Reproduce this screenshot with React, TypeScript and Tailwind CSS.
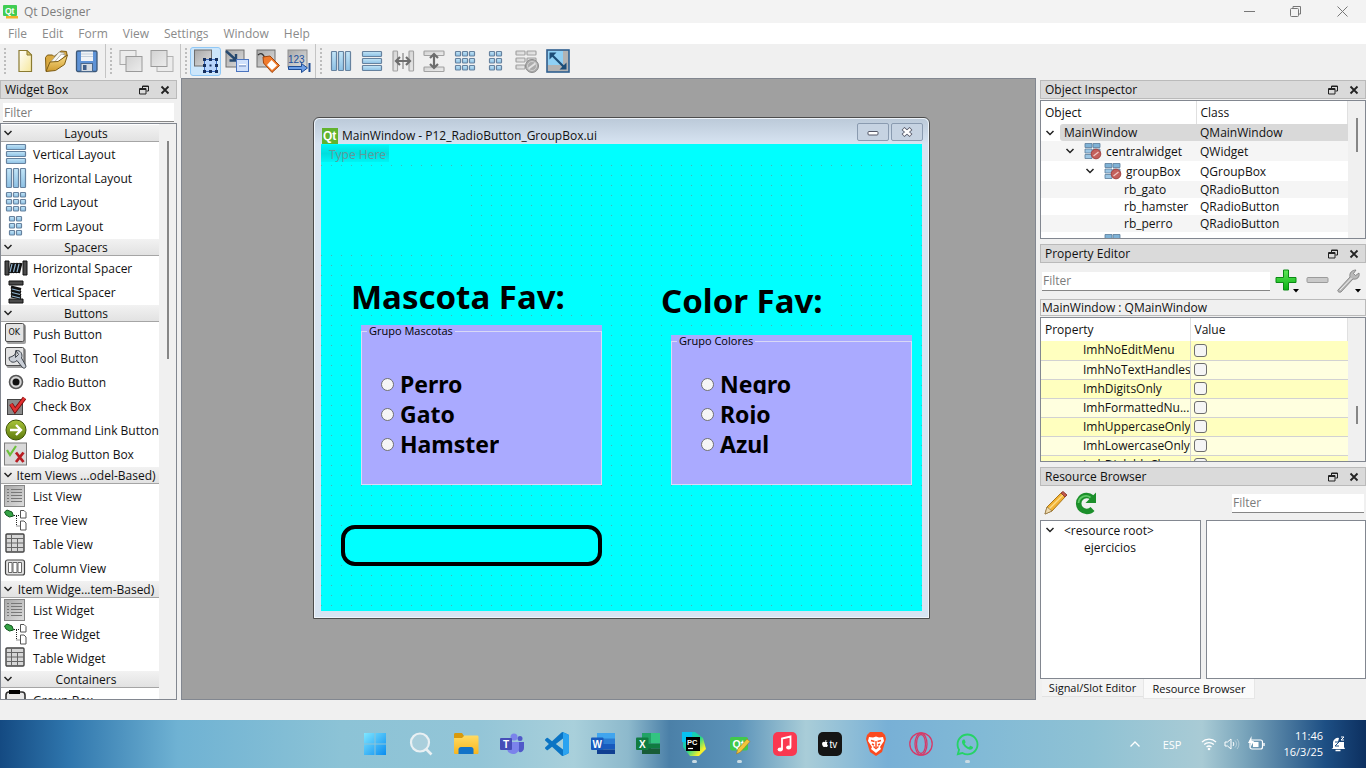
import React from "react";
import { FaApple, FaWhatsapp } from "react-icons/fa";

type P = { children?: React.ReactNode };

/* ---------- shared drawing helpers ---------- */

function Defs() {
  return (
    <svg width="0" height="0" className="absolute" aria-hidden="true">
      <defs>
        <linearGradient id="blueBar" x1="0" y1="0" x2="0" y2="1">
          <stop offset="0" stopColor="#c4e6f8" />
          <stop offset="1" stopColor="#8cc0e4" />
        </linearGradient>
        <linearGradient id="grey" x1="0" y1="0" x2="1" y2="1">
          <stop offset="0" stopColor="#a8a8a8" />
          <stop offset="1" stopColor="#dedede" />
        </linearGradient>
        <linearGradient id="greyLight" x1="0" y1="0" x2="1" y2="1">
          <stop offset="0" stopColor="#d2d2d2" />
          <stop offset="1" stopColor="#ececec" />
        </linearGradient>
        <linearGradient id="gold" x1="0" y1="0" x2="0" y2="1">
          <stop offset="0" stopColor="#fbe08a" />
          <stop offset="1" stopColor="#cf9a2e" />
        </linearGradient>
        <linearGradient id="page" x1="0" y1="0" x2="1" y2="1">
          <stop offset="0" stopColor="#ffffff" />
          <stop offset="1" stopColor="#f6e79a" />
        </linearGradient>
        <linearGradient id="green" x1="0" y1="0" x2="0" y2="1">
          <stop offset="0" stopColor="#5fe85a" />
          <stop offset="1" stopColor="#08b010" />
        </linearGradient>
        <linearGradient id="win" x1="0" y1="0" x2="1" y2="1">
          <stop offset="0" stopColor="#7fe6ff" />
          <stop offset="1" stopColor="#0a8df0" />
        </linearGradient>
        <linearGradient id="folder" x1="0" y1="0" x2="0" y2="1">
          <stop offset="0" stopColor="#ffdb63" />
          <stop offset="1" stopColor="#f8b61e" />
        </linearGradient>
        <linearGradient id="pc" x1="0" y1="0" x2="1" y2="1">
          <stop offset="0" stopColor="#07c3f2" />
          <stop offset="0.5" stopColor="#21d789" />
          <stop offset="0.8" stopColor="#f8f02c" />
        </linearGradient>
        <linearGradient id="olive" x1="0" y1="0" x2="0" y2="1">
          <stop offset="0" stopColor="#a8c43a" />
          <stop offset="1" stopColor="#5d7a0c" />
        </linearGradient>
      </defs>
    </svg>
  );
}

function Svg({ size = 24, box = 24, children }: P & { size?: number; box?: number }) {
  return (
    <svg width={size} height={size} viewBox={`0 0 ${box} ${box}`} fill="none" className="shrink-0" aria-hidden="true">
      {children}
    </svg>
  );
}

type Bar = [number, number, number, number];
function Bars({ list, off }: { list: Bar[]; off?: boolean }) {
  return (
    <>
      {list.map(([x, y, w, h]) => (
        <rect key={`${x}-${y}`} x={x} y={y} width={w} height={h} rx=".8" fill={off ? "url(#greyLight)" : "url(#blueBar)"} stroke={off ? "#a2a2a2" : "#66829f"} strokeWidth="1.2" />
      ))}
    </>
  );
}

const rowsBars: Bar[] = [[2.5, 2.5, 19, 5], [2.5, 9.5, 19, 5], [2.5, 16.5, 19, 5]];
const colsBars: Bar[] = [[2.5, 2.5, 5, 19], [9.5, 2.5, 5, 19], [16.5, 2.5, 5, 19]];
const gridBars: Bar[] = [2.5, 9.5, 16.5].flatMap((y) => [2.5, 9.5, 16.5].map((x) => [x, y, 5, 4.5] as Bar));
const formBars: Bar[] = [2.5, 9.5, 16.5].flatMap((y) => [5.5, 12.5].map((x) => [x, y, 5, 4.5] as Bar));

/* ---------- toolbar icons ---------- */

const NewIcon = () => (
  <Svg><path d="M6 1.5h8l4.5 4.5v16.5H6z" fill="url(#page)" stroke="#8a7a30" strokeWidth="1.2" /><path d="M14 1.5V6h4.5z" fill="#e0c76a" stroke="#8a7a30" /></Svg>
);
const OpenIcon = () => (
  <Svg>
    <path d="M2 22l-.5-13.500 2-2.500h5l1.500 1.500L17 2l5.500.5L23 6z" fill="#d9a940" stroke="#7d5c14" />
    <path d="M5 15L15 3l5.500 1L10 17z" fill="#f7f7f2" stroke="#9a9a90" strokeWidth=".7" />
    <path d="M7 17L17.500 5l4 1L11 18z" fill="#fff" stroke="#9a9a90" strokeWidth=".7" />
    <path d="M2 22.500l4-9.500 8-.5L23.500 6l-3 9.500-9 6z" fill="url(#gold)" stroke="#7d5c14" />
  </Svg>
);
const SaveIcon = () => (
  <Svg>
    <rect x="1.500" y="2" width="20.500" height="20.500" rx="1.500" fill="#5d92d6" stroke="#3c5878" strokeWidth="1.300" />
    <rect x="6" y="2.500" width="12" height="9.500" fill="#f0f3f7" /><path d="M6 5h12M6 7.500h12" stroke="#c3cfdc" />
    <rect x="6" y="14.500" width="11.500" height="8" fill="#d5dbe2" stroke="#4a688c" /><rect x="8" y="16" width="3.500" height="5" fill="#3f5f8a" />
  </Svg>
);
const FrontIcon = () => (
  <Svg>
    <rect x="1" y="1.500" width="16" height="14" fill="#ececec" stroke="#a9a9a9" />
    <rect x="7" y="7.500" width="16" height="15" fill="url(#greyLight)" stroke="#9a9a9a" />
  </Svg>
);
const BackIcon = () => (
  <Svg>
    <rect x="7" y="7.500" width="16" height="15" fill="#ececec" stroke="#b2b2b2" />
    <rect x="1" y="1.500" width="16" height="16" fill="url(#greyLight)" stroke="#9a9a9a" />
  </Svg>
);
const GreySquare = () => <rect x="1" y="1" width="18" height="17" fill="url(#grey)" stroke="#6e6e6e" />;
const EditWidgetsIcon = () => (
  <Svg>
    <rect x="0.500" y="1" width="17" height="16" fill="url(#grey)" stroke="#6e6e6e" />
    <rect x="10.500" y="10.500" width="12" height="12" fill="#b7d4fb" stroke="#3a6bc0" />
    {[9, 15, 21].flatMap((x) => [9, 15, 21].map((y) => (x === 15 && y === 15 ? null : <rect key={`${x}${y}`} x={x} y={y} width="3" height="3" fill="#16305e" />)))}
    <rect x="15.500" y="15.500" width="2" height="2" fill="#16305e" />
  </Svg>
);
const SignalsIcon = () => (
  <Svg>
    <GreySquare />
    <path d="M1 2l10 9M11 5v6.500H4.500" stroke="#26496f" strokeWidth="2.400" />
    <rect x="11.500" y="10.500" width="12" height="12" fill="#cfe0fb" stroke="#4b74bf" /><path d="M14 16.500h7" stroke="#fff" strokeWidth="3" /><path d="M14 17h7" stroke="#3e68b5" />
  </Svg>
);
const BuddiesIcon = () => (
  <Svg>
    <GreySquare />
    <path d="M2 6c3-3 5-1 7 3" stroke="#333" strokeWidth="1.300" />
    <path d="M7 8l7-1 9.500 9.500-7.500 7L7.500 14z" fill="#f07a2c" stroke="#a0440c" />
    <path d="M15.500 11l5.500 5.500-5 4.500-5-5z" fill="#fff" />
  </Svg>
);
const TabOrderIcon = () => (
  <Svg>
    <rect x="1" y="1" width="19" height="17" fill="url(#grey)" stroke="#8e8e8e" />
    <text x="1" y="14" fontSize="10" fill="#1c4f9c" fontFamily="Liberation Sans, sans-serif">123</text>
    <path d="M1.500 17.500h13v-3l6 4.500-6 4.500v-3h-13z" fill="#6d9fe6" stroke="#1f4c94" /><path d="M22.500 14v9" stroke="#1f4c94" strokeWidth="2" />
  </Svg>
);
const SplitHIcon = () => (
  <Svg>
    <Bars off list={[[2, 2, 4.500, 20], [18, 2, 4.500, 20]]} />
    <path d="M12 4v16" stroke="#b0b0b0" strokeWidth="2" /><path d="M5 12h14M9 8l-4 4 4 4M15 8l4 4-4 4" stroke="#6d6d6d" strokeWidth="2.200" />
  </Svg>
);
const SplitVIcon = () => (
  <Svg>
    <Bars off list={[[2, 2, 20, 4.500], [2, 18, 20, 4.500]]} />
    <path d="M12 5v14M8 9l4-4 4 4M8 15l4 4 4-4" stroke="#6d6d6d" strokeWidth="2.200" />
  </Svg>
);
const BreakIcon = () => (
  <Svg>
    <Bars off list={[[1, 2, 9, 4], [12, 2, 9, 4], [1, 9, 9, 4], [12, 9, 9, 4], [1, 16, 9, 4]]} />
    <circle cx="17" cy="17" r="6.500" fill="#ababab" stroke="#8c8c8c" /><path d="M13 20l8-6" stroke="#e2e2e2" strokeWidth="2" /><circle cx="17" cy="17" r="4.500" stroke="#d0d0d0" strokeWidth="1" />
  </Svg>
);
const AdjustIcon = () => (
  <Svg>
    <rect x="1" y="1" width="22" height="22" fill="#b3b3b3" stroke="#2f5f90" strokeWidth="1.600" /><rect x="2" y="2" width="15" height="14" fill="#8fd0f5" />
    <path d="M5 5l14 14" stroke="#1c4d78" strokeWidth="2.200" /><path d="M3.500 3.500h7l-7 7zM20.500 20.500h-7l7-7z" fill="#1c4d78" />
  </Svg>
);

/* ---------- widget box icons ---------- */

const VSpring = () => (
  <>
    <path d="M5 1h14v4H5zM5 19h14v4H5z" fill="#4a4a4a" stroke="#111" />
    <path d="M7 7l10 2.500M7 10l10 2.500M7 13l10 2.500M7 16l10 2" stroke="#111" strokeWidth="3" /><path d="M8 9l8 2M8 12.500l8 2M8 16l8 2" stroke="#8fb3cf" strokeWidth="1.200" />
  </>
);
const VSpacer = () => <Svg><VSpring /></Svg>;
const HSpacer = () => <Svg><g transform="rotate(90 12 12)"><VSpring /></g></Svg>;
const Btn = ({ children }: P) => (
  <>
    <rect x="2.500" y="2.500" width="19.500" height="19.500" rx="2" fill="#a0a0a0" /><rect x="1.500" y="1.500" width="18.500" height="18" rx="1.500" fill="#e3e3e3" stroke="#4b4b4b" />
    {children}
  </>
);
const PushIcon = () => <Svg><Btn><text x="4.500" y="13" fontSize="8" fill="#111" fontFamily="DejaVu Sans, sans-serif">OK</text></Btn></Svg>;
const ToolIcon = () => (
  <Svg><Btn><path d="M12 4.500l-1 4-3 2 -3 1c0 5 5 6 8 3l5 6.500c2 2.500 5 .5 3.500-2L17.500 12c1.500-4-1-8-5.500-7.500l2.500 4-3 3z" fill="#c9ced6" stroke="#3d434b" /></Btn></Svg>
);
const RadioIcon = () => <Svg><circle cx="12" cy="12" r="6.500" fill="#d5d5d5" stroke="#555" strokeWidth="1.600" /><circle cx="12" cy="12" r="3.500" fill="#111" /></Svg>;
const CheckIcon = () => <Svg><rect x="3.500" y="5.500" width="15" height="15" fill="#8b8b8b" stroke="#444" /><path d="M7 10l4 6.500L20.500 4" stroke="#7a0909" strokeWidth="4.200" /><path d="M7 10l4 6.500L20.500 4" stroke="#e03030" strokeWidth="2.600" /></Svg>;
const CommandIcon = () => <Svg><circle cx="12" cy="12" r="10" fill="url(#olive)" stroke="#3e5406" /><path d="M6 12h11M12 7l5 5-5 5" stroke="#fff" strokeWidth="2.400" /></Svg>;
const DialogIcon = () => <Svg><rect x=".5" y="1" width="22" height="22" fill="#d9d9d9" stroke="#7c7c7c" /><path d="M3 8l3 5 6-9" stroke="#6cc03c" strokeWidth="2.200" /><path d="M12 10.500l7.500 9.500M19.500 10.500L12 20" stroke="#b81c22" strokeWidth="2.800" /></Svg>;
const ListIcon = () => <Svg><rect x=".5" y="1.500" width="20" height="21" fill="url(#grey)" stroke="#858585" /><path d="M7 5.500h11M7 8.500h11M7 11.500h11M7 14.500h11M7 17.500h11M3 5.500h2M3 8.500h2M3 11.500h2M3 14.500h2M3 17.500h2" stroke="#777" /></Svg>;
const TreeIcon = () => (
  <Svg>
    <path d="M.5 4L3 2l5 2 1.500 4-4 1L2 7z" fill="#35a345" stroke="#11551d" /><path d="M10 7.500h6M12.500 8v10H16" stroke="#222" strokeDasharray="1 1" />
    <path d="M16.500 2.500h3.500l2 2V10h-5.500zM16.500 13h3.500l2 2v7h-5.500z" fill="#fff" stroke="#555" />
  </Svg>
);
const TableIcon = () => <Svg><rect x="2" y="2" width="18" height="18" rx="1" fill="#d7d7d7" stroke="#444" strokeWidth="1.400" /><path d="M2 6.500h18M2 11h18M2 15.500h18M7.500 2v18M13.500 7v13" stroke="#666" /></Svg>;
const ColumnIcon = () => <Svg><rect x="1.500" y="4" width="19" height="15" rx="2" fill="#e2e2e2" stroke="#444" strokeWidth="1.200" /><path d="M4.500 6.500h3.500v10H4.500zM9 6.500h4v10H9zM14 6.500h3.500v10H14z" fill="#fff" stroke="#666" /></Svg>;
const GroupIcon = () => <Svg><rect x="2" y="4" width="19" height="18" rx="3" fill="#e8e8e8" stroke="#333" strokeWidth="1.600" /><rect x="5" y="2" width="11" height="4" fill="#000" /></Svg>;

/* ---------- dock chrome ---------- */

const Chevron = () => <Svg size={10} box={10}><path d="M1.500 3L5 6.500 8.500 3" stroke="#222" strokeWidth="1.500" /></Svg>;

function DockTitle({ children }: P) {
  return (
    <header className="flex h-[19px] shrink-0 items-center border border-[#bababa] bg-[#dadada] pl-1 pr-[6px]">
      <h2 className="flex-1">{children}</h2>
      <button aria-label={`Float ${children}`} className="mr-[11px]">
        <Svg size={10} box={10}><path d="M3.500 3V1h6v5H7.500M3 1.500h7M.5 3.500h6.500v5.500H.5zM0 4.500h7" stroke="#222" /></Svg>
      </button>
      <button aria-label={`Close ${children}`}>
        <Svg size={10} box={10}><path d="M1.500 1.500l7 7M8.500 1.500l-7 7" stroke="#222" strokeWidth="1.800" /></Svg>
      </button>
    </header>
  );
}

function Filter({ label, className }: { label: string; className: string }) {
  return <input type="text" aria-label={label} placeholder="Filter" className={`h-[19px] min-w-0 border-b border-[#868686] bg-white px-px text-[#222] outline-none placeholder:text-[#7b7b7b] ${className}`} />;
}

/* ---------- data ---------- */

const categories: { name: string; items: [string, React.ReactNode][] }[] = [
  { name: "Layouts", items: [["Vertical Layout", <Svg key="a"><Bars list={rowsBars} /></Svg>], ["Horizontal Layout", <Svg key="b"><Bars list={colsBars} /></Svg>], ["Grid Layout", <Svg key="c"><Bars list={gridBars} /></Svg>], ["Form Layout", <Svg key="d"><Bars list={formBars} /></Svg>]] },
  { name: "Spacers", items: [["Horizontal Spacer", <HSpacer key="a" />], ["Vertical Spacer", <VSpacer key="b" />]] },
  { name: "Buttons", items: [["Push Button", <PushIcon key="a" />], ["Tool Button", <ToolIcon key="b" />], ["Radio Button", <RadioIcon key="c" />], ["Check Box", <CheckIcon key="d" />], ["Command Link Button", <CommandIcon key="e" />], ["Dialog Button Box", <DialogIcon key="f" />]] },
  { name: "Item Views ...odel-Based)", items: [["List View", <ListIcon key="a" />], ["Tree View", <TreeIcon key="b" />], ["Table View", <TableIcon key="c" />], ["Column View", <ColumnIcon key="d" />]] },
  { name: "Item Widge...tem-Based)", items: [["List Widget", <ListIcon key="a" />], ["Tree Widget", <TreeIcon key="b" />], ["Table Widget", <TableIcon key="c" />]] },
  { name: "Containers", items: [["Group Box", <GroupIcon key="a" />]] },
];

const toolbars: { name: string; edge: string; checked?: number; tools: [string, React.ReactNode][] }[] = [
  { name: "File", edge: "border-r border-[#c4c4c4] pr-[3px]", tools: [["New", <NewIcon key="a" />], ["Open", <OpenIcon key="b" />], ["Save", <SaveIcon key="c" />]] },
  { name: "Edit", edge: "border-r border-[#c4c4c4] pr-[3px]", tools: [["Bring to Front", <FrontIcon key="a" />], ["Send to Back", <BackIcon key="b" />]] },
  { name: "Tools", edge: "border-r border-[#c4c4c4] pr-px", checked: 0, tools: [["Edit Widgets", <EditWidgetsIcon key="a" />], ["Edit Signals/Slots", <SignalsIcon key="b" />], ["Edit Buddies", <BuddiesIcon key="c" />], ["Edit Tab Order", <TabOrderIcon key="d" />]] },
  {
    name: "Form",
    edge: "",
    tools: [
      ["Lay Out Horizontally", <Svg key="a"><Bars list={colsBars} /></Svg>], ["Lay Out Vertically", <Svg key="b"><Bars list={rowsBars} /></Svg>],
      ["Lay Out Horizontally in Splitter", <SplitHIcon key="c" />], ["Lay Out Vertically in Splitter", <SplitVIcon key="d" />],
      ["Lay Out in a Grid", <Svg key="e"><Bars list={gridBars} /></Svg>], ["Lay Out in a Form Layout", <Svg key="f"><Bars list={formBars} /></Svg>],
      ["Break Layout", <BreakIcon key="g" />], ["Adjust Size", <AdjustIcon key="h" />],
    ],
  },
];

const properties = ["ImhNoEditMenu", "ImhNoTextHandles", "ImhDigitsOnly", "ImhFormattedNu...", "ImhUppercaseOnly", "ImhLowercaseOnly", "ImhDialableChar..."];

/* ---------- sections ---------- */

function TitleBar() {
  return (
    <header className="flex h-[23px] shrink-0 items-center bg-[#f3f3f3] pl-[3px] text-[#7d7d7d]">
      <Svg size={15} box={15}>
        <rect x="0" y="1" width="14" height="11" rx="1" fill="#41cd52" /><rect x="3" y="12" width="12" height="2.500" fill="#f0b429" />
        <text x="2" y="9.500" fontSize="8.500" fill="#fff" fontWeight="700" fontFamily="Liberation Sans, sans-serif">Qt</text>
      </Svg>
      <h1 className="ml-[6px] flex-1">Qt Designer</h1>
      <button aria-label="Minimize" className="flex w-[46px] justify-center"><Svg size={11} box={11}><path d="M0 5.500h11" stroke="#777" /></Svg></button>
      <button aria-label="Restore" className="flex w-[46px] justify-center"><Svg size={11} box={11}><path d="M3 2.500V.5h7.500V8h-2" stroke="#777" /><rect x=".5" y="2.500" width="8" height="8" rx="1" stroke="#777" /></Svg></button>
      <button aria-label="Close" className="flex w-[48px] justify-center"><Svg size={11} box={11}><path d="M.5.5l10 10M10.500.5l-10 10" stroke="#777" /></Svg></button>
    </header>
  );
}

function Toolbars() {
  return (
    <div className="flex h-[34px] shrink-0 bg-[#f0f0f0]">
      {toolbars.map((bar) => (
        <div key={bar.name} role="toolbar" aria-label={bar.name} className={`flex items-center pl-[4px] ${bar.edge}`}>
          <span className="mr-[3px] flex flex-col gap-[2px]">
            {[0, 1, 2, 3, 4, 5, 6].map((n) => <i key={n} className="size-[2px] bg-[#bdbdbd]" />)}
          </span>
          {bar.tools.map(([name, icon], n) => (
            <button key={name} aria-label={name} className={`flex h-[29px] w-[31px] items-center justify-center rounded-[3px] border ${bar.checked === n ? "border-[#90c8f6] bg-[#cce6fb]" : "border-transparent"}`}>
              {icon}
            </button>
          ))}
        </div>
      ))}
    </div>
  );
}

function WidgetBox() {
  return (
    <aside className="flex w-[177px] shrink-0 flex-col pt-[2px]">
      <DockTitle>Widget Box</DockTitle>
      <Filter label="Filter widgets" className="mx-[3px] mt-[4px]" />
      <div className="mt-px flex min-h-0 flex-1 border border-[#828790] bg-white">
        <div className="min-w-0 flex-1 overflow-hidden">
          {categories.map((c) => (
            <section key={c.name}>
              <h3 className="flex h-[18px] items-center whitespace-nowrap border-y border-t-white border-b-[#a5a5a5] bg-linear-to-b from-[#f2f2f2] to-[#e2e2e2] pl-[2px]">
                <Chevron />
                <span className="flex-1 text-center">{c.name}</span>
              </h3>
              <ul>
                {c.items.map(([name, icon]) => (
                  <li key={name} className="flex h-[24px] items-center gap-[5px] whitespace-nowrap pl-[3px]">
                    {icon}
                    {name}
                  </li>
                ))}
              </ul>
            </section>
          ))}
        </div>
        <div className="w-[17px] shrink-0 bg-[#f0f0f0] pl-[8px] pt-[17px]"><div className="h-[218px] w-[2px] bg-[#868686]" /></div>
      </div>
    </aside>
  );
}

function Group({ title, name, options, className, indent }: { title: string; name: string; options: string[]; className: string; indent: string }) {
  return (
    <div className={`absolute w-[241px] bg-[#aaaaff] ${className}`}>
      <fieldset className="h-full border border-[#d9d9f6]">
        <legend className="ml-[5px] h-[12px] px-[2px] text-[11px] leading-[12px]">{title}</legend>
        <div className={`absolute bottom-[31px] flex flex-col gap-[10px] ${indent}`}>
          {options.map((o) => (
            <label key={o} className="flex h-[20px] items-center gap-[6px] overflow-hidden font-['Noto_Sans',sans-serif] text-[23px] leading-[20px] font-bold">
              <input type="radio" name={name} className="size-[13px] appearance-none rounded-full border border-[#707070] bg-[#f6f6f6]" />
              <span className="h-[20px] leading-[20px]">{o}</span>
            </label>
          ))}
        </div>
      </fieldset>
    </div>
  );
}

function FormWindow() {
  return (
    <section className="absolute left-[131px] top-[38px] w-[617px] rounded-t-[6px] border border-[#4c4c4c] bg-[#d7e4f2] px-[7px] pb-[7px] shadow-[inset_0_0_0_1px_#eef4fa]">
      <header className="-mx-[6px] mt-px flex h-[25px] items-center rounded-t-[5px] bg-linear-to-b from-[#bccad9] to-[#d7e4f2] px-[6px]">
        <span className="ml-px mt-[8px]">
          <Svg size={16} box={16}><rect width="16" height="16" fill="#62b32e" /><text x="1" y="12" fontSize="12" fontWeight="700" fill="#fff" fontFamily="Liberation Sans Narrow, Liberation Sans, sans-serif">Qt</text></Svg>
        </span>
        <h2 className="ml-[4px] mt-[8px] flex-1">MainWindow - P12_RadioButton_GroupBox.ui</h2>
        <button aria-label="Minimize form" className="mr-[2px] flex h-[18px] w-[32px] items-center justify-center rounded-[2px] border border-[#8a9bb0] bg-[#c6d3e2]">
          <Svg size={12} box={12}><rect x="1" y="5.500" width="10" height="3.500" rx="1" fill="#fff" stroke="#535666" /></Svg>
        </button>
        <button aria-label="Close form" className="-mr-px flex h-[18px] w-[32px] items-center justify-center rounded-[2px] border border-[#8a9bb0] bg-[#c6d3e2]">
          <Svg size={12} box={12}><path d="M2 2.500l8 7M10 2.500l-8 7" stroke="#535666" strokeWidth="4.200" /><path d="M2.500 3l7 6M9.500 3l-7 6" stroke="#fff" strokeWidth="2.400" /></Svg>
        </button>
      </header>
      <div className="relative h-[467px] bg-[#00ffff] text-black">
        <svg className="absolute inset-0 size-full" aria-hidden="true">
          <defs><pattern id="dots" width="10" height="10" patternUnits="userSpaceOnUse" y="1"><rect width="1" height="1" fill="#4cb4b4" /></pattern></defs>
          <rect y="21" width="601" height="446" fill="url(#dots)" />
          <path d="M0 25h148v80H0zM490 25h92v80h-92zM30 135h249v35H30zM340 138h180v39H340z" fill="#00ffff" />
        </svg>
        <div className="absolute left-0 top-px h-[17px] w-[68px] bg-linear-to-b from-[#00f4f4] via-[#00dede] to-[#00f4f4] pl-[8px] leading-[20px] text-[#5f9a9a]">Type Here</div>
        <h3 className="absolute left-[30px] top-[131px] whitespace-nowrap font-['Noto_Sans',sans-serif] text-[33px] leading-[44px] font-bold">Mascota Fav:</h3>
        <h3 className="absolute left-[340px] top-[135px] whitespace-nowrap font-['Noto_Sans',sans-serif] text-[33px] leading-[44px] font-bold">Color Fav:</h3>
        <Group title="Grupo Mascotas" name="mascota" options={["Perro", "Gato", "Hamster"]} className="left-[40px] top-[181px] h-[160px]" indent="left-[20px]" />
        <Group title="Grupo Colores" name="color" options={["Negro", "Rojo", "Azul"]} className="left-[350px] top-[191px] h-[150px]" indent="left-[30px]" />
        <input type="text" aria-label="Resultado" className="absolute left-[20px] top-[381px] h-[41px] w-[261px] rounded-[14px] border-4 border-black bg-[#00ffff] px-2 outline-none" />
      </div>
    </section>
  );
}

const LayoutBroken = () => (
  <Svg size={18} box={18}>
    <path d="M1 1.500h7v4H1zM9 1.500h7v4H9z" fill="#7fb2d6" stroke="#5b7c9a" strokeWidth=".8" />
    <path d="M1 7h7v4H1zM9 7h7v4H9zM1 12.500h7v4H1z" fill="#9cc6e4" stroke="#5b7c9a" strokeWidth=".8" />
    <circle cx="12" cy="12" r="4.800" fill="#c4605c" stroke="#a34444" /><path d="M9.500 14l5-4" stroke="#efc8c6" strokeWidth="1.300" />
  </Svg>
);

function ObjectInspector() {
  return (
    <section className="flex h-[159px] shrink-0 flex-col">
      <DockTitle>Object Inspector</DockTitle>
      <div className="mt-px flex min-h-0 flex-1 overflow-hidden border border-[#828790] bg-white">
        <table className="w-full table-fixed border-collapse self-start text-left">
          <colgroup><col className="w-[155px]" /><col /></colgroup>
          <thead>
            <tr className="h-[23px]"><th className="border-r border-[#e0e0e0] p-0 pl-1 font-normal">Object</th><th className="border-r border-[#e0e0e0] p-0 pl-[4px] font-normal">Class</th></tr>
          </thead>
          <tbody>
            <tr className="h-[17px]"><td className="p-0"><div className="flex items-center gap-[5px] pl-[4px]"><Chevron /><span className="-my-px h-[17px] flex-1 rounded-l-[3px] bg-[#d9d9d9] pl-[4px] leading-[17px]">MainWindow</span></div></td><td className="bg-[#d9d9d9] p-0 pl-[4px]">QMainWindow</td></tr>
            <tr className="h-[20px] bg-[#f5f5f5]"><td className="p-0"><div className="flex items-center pl-[24px]"><Chevron /><span className="ml-[9px] mr-[4px]"><LayoutBroken /></span>centralwidget</div></td><td className="p-0 pl-[4px]">QWidget</td></tr>
            <tr className="h-[20px]"><td className="p-0"><div className="flex items-center pl-[44px]"><Chevron /><span className="ml-[9px] mr-[4px]"><LayoutBroken /></span>groupBox</div></td><td className="p-0 pl-[4px]">QGroupBox</td></tr>
            {["rb_gato", "rb_hamster", "rb_perro"].map((n) => (
              <tr key={n} className="h-[17px] odd:bg-white even:bg-[#f5f5f5]"><td className="p-0 pl-[83px]">{n}</td><td className="p-0 pl-[4px]">QRadioButton</td></tr>
            ))}
            <tr className="h-[20px]"><td className="p-0"><div className="flex items-center pl-[44px]"><Chevron /><span className="ml-[9px] mr-[4px]"><LayoutBroken /></span>groupBox_2</div></td><td className="p-0 pl-[4px]">QGroupBox</td></tr>
          </tbody>
        </table>
        <div className="w-[17px] shrink-0 bg-[#f0f0f0] pl-[8px] pt-[17px]"><div className="h-[34px] w-[2px] bg-[#868686]" /></div>
      </div>
    </section>
  );
}

const Caret = () => <path d="M18 20h6l-3 3.500z" fill="#000" />;

function PropertyEditor() {
  return (
    <section className="mt-[5px] flex h-[218px] shrink-0 flex-col">
      <DockTitle>Property Editor</DockTitle>
      <div className="flex h-[36px] items-center pl-[2px] pr-[5px]">
        <Filter label="Filter properties" className="flex-1" />
        <div className="ml-[5px] flex gap-[7px]">
          <button aria-label="Add dynamic property"><Svg><path d="M8.500 1h5v7.500H21v5h-7.500V21h-5v-7.500H1v-5h7.500z" fill="url(#green)" stroke="#0a8a14" /><Caret /></Svg></button>
          <button aria-label="Remove dynamic property"><Svg><rect x="1" y="8.500" width="21" height="5" rx="1" fill="#c9c9c9" stroke="#9b9b9b" /></Svg></button>
          <button aria-label="Configure"><Svg><path d="M1 21L13 8c-1-4 2-7 6-7l-2.500 3.500 2 2L22 4c1 4-2 7-6 6L4 23c-2 1-4-1-3-2z" fill="#b9b9b9" stroke="#777" strokeWidth=".8" /><path d="M3 21L14.500 9" stroke="#efefef" /><Caret /></Svg></button>
        </div>
      </div>
      <p className="h-[17px] shrink-0 border border-[#bababa] pl-px leading-[16px] text-[#111]">MainWindow : QMainWindow</p>
      <div className="mt-px flex min-h-0 flex-1 overflow-hidden border border-[#828790] bg-white">
        <table className="w-full table-fixed border-collapse self-start text-left">
          <colgroup><col className="w-[149px]" /><col /></colgroup>
          <thead>
            <tr className="h-[23px]"><th className="border-r border-[#e0e0e0] p-0 pl-1 font-normal">Property</th><th className="border-r border-[#e0e0e0] p-0 pl-[4px] font-normal">Value</th></tr>
          </thead>
          <tbody>
            {properties.map((p) => (
              <tr key={p} className="h-[19px] border-b border-[#d2d2d2] odd:bg-[#ffffbf] even:bg-[#ffffdf]">
                <td className="overflow-hidden whitespace-nowrap border-r border-[#d2d2d2] p-0 pl-[42px] leading-[18px]">{p}</td>
                <td className="p-0 pl-[3px]"><input type="checkbox" aria-label={p} className="block size-[13px] appearance-none rounded-[3px] border border-[#6e6e6e] bg-[#f5f5f5]" /></td>
              </tr>
            ))}
          </tbody>
        </table>
        <div className="w-[17px] shrink-0 bg-[#f0f0f0] pl-[8px] pt-[88px]"><div className="h-[18px] w-[2px] bg-[#868686]" /></div>
      </div>
    </section>
  );
}

function ResourceBrowser() {
  return (
    <section className="mt-[5px] flex min-h-0 flex-1 flex-col">
      <DockTitle>Resource Browser</DockTitle>
      <div className="flex h-[34px] items-center pl-[4px] pr-[2px]">
        <button aria-label="Edit resources" className="mr-[6px]">
          <Svg><path d="M1 23l2-7L17 2l4 4L8 20z" fill="#f2b233" stroke="#a9761a" /><path d="M5 18L19 4" stroke="#fbdc87" strokeWidth="1.500" /><path d="M17 2l2-1.500 4 3.500-2 2z" fill="#c2584a" stroke="#8f4035" /><path d="M1 23l2-7 5 4z" fill="#f1dcb0" stroke="#7d6a44" strokeWidth=".6" /></Svg>
        </button>
        <button aria-label="Reload">
          <Svg><path d="M18.500 18a8 8 0 1 1-.5-11.500" stroke="#1c8f2b" strokeWidth="5.500" /><path d="M22 1.500V12H11.500z" fill="#1c8f2b" /><path d="M4.500 12a7.500 7.500 0 0 1 12-5.500" stroke="#5fca66" strokeWidth="1.800" /></Svg>
        </button>
        <span className="flex-1" />
        <Filter label="Filter resources" className="w-[132px]" />
      </div>
      <div className="flex min-h-0 flex-1 gap-[5px]">
        <ul className="flex-1 border border-[#828790] bg-white">
          <li className="flex h-[18px] items-center gap-[9px] pl-[4px]"><Chevron />&lt;resource root&gt;</li>
          <li className="h-[17px] pl-[43px] leading-[17px]">ejercicios</li>
        </ul>
        <div className="flex-1 border border-[#828790] bg-white" />
      </div>
      <div role="tablist" className="flex h-[21px] shrink-0 items-start pl-[2px] text-[11px]">
        <button role="tab" aria-selected="false" className="h-[18px] w-[101px] border-b border-[#e2e2e2] bg-[#f3f3f3]">Signal/Slot Editor</button>
        <button role="tab" aria-selected="true" className="h-[20px] w-[112px] border-x border-b border-[#e6e6e6] bg-[#fafafa]">Resource Browser</button>
      </div>
    </section>
  );
}

/* ---------- taskbar ---------- */

const sans = "Liberation Sans, sans-serif";

const apps: [string, boolean, React.ReactNode][] = [
  ["Start", false, <path key="a" d="M1 1h10.500v10.500H1zM12.500 1H23v10.500H12.500zM1 12.500h10.500V23H1zM12.500 12.500H23V23H12.500z" fill="url(#win)" />],
  ["Search", false, <g key="a" stroke="#e9f0f3"><circle cx="11" cy="10.500" r="9" strokeWidth="2.200" fill="#c3d9e1" fillOpacity=".5" /><path d="M17 17l5.500 5.500" strokeWidth="2.600" /></g>],
  ["File Explorer", false, <g key="a"><path d="M0 2.500C0 1.500.5 1 1.500 1H8l2 3v3H0z" fill="#d99a0b" /><path d="M0 6h8l2.500-2.500H23c1 0 1.500.5 1.500 1.500v15.500c0 1-.5 1.500-1.500 1.500H1.500C.5 22 0 21.500 0 20.500z" fill="url(#folder)" /><path d="M4.500 22v-4.500c0-1.500 1-2.500 2.500-2.500h10c1.500 0 2.500 1 2.500 2.500V22z" fill="#1273c8" /></g>],
  ["Teams", false, <g key="a"><circle cx="20" cy="6.500" r="2.500" fill="#5059c9" /><path d="M15 10h9v6a4 4 0 0 1-5 4z" fill="#5059c9" /><circle cx="14" cy="5" r="3.500" fill="#7b83eb" /><path d="M7 10h12v6c0 8-12 8-12 0z" fill="#7b83eb" /><rect x="0" y="6" width="12" height="12" rx="1" fill="#464eb8" /><text x="3" y="15.500" fontSize="10" fontWeight="700" fill="#fff" fontFamily={sans}>T</text></g>],
  ["Visual Studio Code", false, <g key="a"><path d="M23.150 2.587L18.210.21a1.494 1.494 0 0 0-1.705.29l-9.460 8.630-4.120-3.128a.999.999 0 0 0-1.276.057L.327 7.261A1 1 0 0 0 .326 8.740L3.899 12 .326 15.260a1 1 0 0 0 .001 1.479L1.650 17.940a.999.999 0 0 0 1.276.057l4.120-3.128 9.460 8.630a1.492 1.492 0 0 0 1.704.29l4.942-2.377A1.500 1.500 0 0 0 24 20.060V3.939a1.500 1.500 0 0 0-.85-1.352zm-5.146 14.861L10.826 12l7.178-5.448v10.896z" fill="#0a74c4" /><path d="M18 .3l5.200 2.300c.5.300.8.800.8 1.300v16.200c0 .5-.3 1-.8 1.300L18 23.800z" fill="#2aa3f1" /></g>],
  ["Word", false, <g key="a"><path d="M6 1h18v6H6z" fill="#41a5ee" /><path d="M6 6.500h18V12H6z" fill="#2b7cd3" /><path d="M6 12h18v5.500H6z" fill="#185abd" /><path d="M6 17.500h18V22H6z" fill="#103f91" /><rect y="5.500" width="12.500" height="12.500" rx="1" fill="#185abd" /><text x="1.500" y="15.500" fontSize="10" fontWeight="700" fill="#fff" fontFamily={sans}>W</text></g>],
  ["Excel", false, <g key="a"><path d="M6 1h9v10.500H6z" fill="#21a366" /><path d="M15 1h9v10.500h-9z" fill="#33c481" /><path d="M6 11.500h9V22H6z" fill="#107c41" /><path d="M15 11.500h9v5h-9z" fill="#107c41" /><path d="M6 16.500h18V22H6z" fill="#185c37" /><rect y="5.500" width="12.500" height="12.500" rx="1" fill="#107c41" /><text x="3" y="15.500" fontSize="10" fontWeight="700" fill="#fff" fontFamily={sans}>X</text></g>],
  ["PyCharm", true, <g key="a"><path d="M1 0h12l8 6 3 11-7 7H8L1 15z" fill="url(#pc)" /><path d="M0 0h10v10H0z" fill="#07c3f2" /><rect x="4" y="5" width="14" height="14" fill="#000" /><text x="5" y="12.500" fontSize="7.500" fontWeight="700" fill="#fff" fontFamily={sans}>PC</text><path d="M6 16.500h5" stroke="#fff" strokeWidth="1.200" /></g>],
  ["Qt Designer", true, <g key="a"><rect x="3" y="5" width="18" height="13.500" rx="2" fill="#41c94b" /><text x="5.500" y="15.500" fontSize="10.500" fontWeight="700" fill="#fff" fontFamily={sans}>Qt</text><path d="M9.500 22l1-4.500L20 7l3 2.500L13.500 20z" fill="#f2c53a" stroke="#a37b1c" strokeWidth=".6" /></g>],
  ["Music", false, <g key="a"><rect width="24" height="24" rx="5" fill="#fa3850" /><path d="M9 17.500V6.500l8.500-2v10.500" stroke="#fff" strokeWidth="1.800" /><ellipse cx="7.200" cy="17.500" rx="2.600" ry="2" fill="#fff" /><ellipse cx="15.700" cy="15.500" rx="2.600" ry="2" fill="#fff" /></g>],
  ["Apple TV", false, <g key="a"><rect width="24" height="24" rx="5" fill="#151515" /><FaApple x="3" y="7.500" width="8" height="8" size={8} color="#fff" /><text x="11.500" y="15.500" fontSize="10" fill="#fff" fontFamily={sans}>tv</text></g>],
  ["Brave", false, <g key="a"><path d="M6 0h12l3 3 1 4-4 13-6 4-6-4L2 7l1-4z" fill="#fb4a1f" /><path d="M5 5l4 .5 3-1 3 1L19 5l1 4-4 6 1 2-5 4-5-4 1-2-4-6z" fill="#fff" /><path d="M7 8.500l3.500 1M17 8.500l-3.500 1M12 9v6M9.500 14.500l2.500 2 2.500-2M8 12l2 1M16 12l-2 1" stroke="#fb4a1f" strokeWidth="1.400" /></g>],
  ["Opera", false, <g key="a" stroke="#d63a68" strokeWidth="1.300"><circle cx="12" cy="12" r="11.200" /><ellipse cx="12" cy="12" rx="6" ry="11" /><ellipse cx="12" cy="12" rx="4.500" ry="9.500" /></g>],
  ["WhatsApp", true, <FaWhatsapp key="a" size={25} color="#25d366" />],
];

function Taskbar() {
  return (
    <footer className="flex h-[48px] shrink-0 items-center bg-[linear-gradient(90deg,#144a82_0%,#2f76ad_5%,#6fb2d3_13%,#8cc3d6_25%,#93c5d7_35%,#a9d0db_42%,#8db9cc_46%,#4b80a8_49%,#5b93b9_54%,#a9cdd8_59%,#78b0d6_65%,#82bad6_72%,#8fc2d4_80%,#a9cbd5_88%,#7ba6bc_91%,#1d4f84_97%,#0d3060_100%)] text-white">
      <nav aria-label="Apps" className="ml-[353px] flex w-[637px] shrink-0 justify-between">
        {apps.map(([name, open, art]) => (
          <button key={name} aria-label={name} className="relative flex h-[48px] w-[45px] items-center justify-center">
            <Svg size={25} box={25}>{art}</Svg>
            {open && <i className="absolute bottom-[5px] h-[3px] w-[5px] rounded-full bg-[#c9dbe4]" />}
          </button>
        ))}
      </nav>
      <div className="ml-auto flex items-center pr-[20px]">
        <button aria-label="Hidden icons" className="mr-[22px]"><Svg size={12} box={12}><path d="M1.500 8.500L6 4l4.500 4.500" stroke="#fff" strokeWidth="1.300" /></Svg></button>
        <button className="mr-[20px] text-[11px]">ESP</button>
        <button aria-label="Network, sound and battery" className="mr-[18px] flex items-center gap-[7px]">
          <Svg size={16} box={16}><path d="M1 6a10 10 0 0 1 14 0M3.200 8.500a7 7 0 0 1 9.600 0M5.500 11a4 4 0 0 1 5 0" stroke="#fff" strokeWidth="1.300" /><circle cx="8" cy="13" r="1.300" fill="#fff" /></Svg>
          <Svg size={16} box={16}><path d="M1 6v4h2.500L7 13V3L3.500 6z" stroke="#fff" /><path d="M9 6c1 1 1 3 0 4" stroke="#fff" /><path d="M11 4.500c2 2 2 5 0 7M13 3c2.500 3 2.500 7 0 10" stroke="#fff" opacity=".4" /></Svg>
          <Svg size={18} box={18}><rect x="3" y="5" width="12.500" height="9" rx="2" stroke="#fff" strokeWidth="1.200" /><rect x="6" y="7" width="5.500" height="5" fill="#fff" /><path d="M17 8v3" stroke="#fff" strokeWidth="1.400" /><path d="M4.500 1L1 8h3l-1 5 4-7H4.500z" fill="#fff" /></Svg>
        </button>
        <button className="text-right text-[11px] leading-[16px]">11:46<br />16/3/25</button>
        <button aria-label="Notifications" className="ml-[7px]">
          <Svg size={16} box={16}><path d="M3 12V6a5 5 0 0 1 6-4l-1 4h6v5l1 2H1.500z" fill="#fff" /><path d="M5.500 14.500h5" stroke="#fff" strokeWidth="1.500" /><path d="M5 6h4l-4 4h4" stroke="#1d4f84" /><path d="M11 1h3l-3 3h3" stroke="#fff" /></Svg>
        </button>
      </div>
    </footer>
  );
}

export default function App() {
  return (
    <div className="flex h-screen min-h-[700px] flex-col overflow-hidden bg-[#f0f0f0] font-['Open_Sans','Noto_Sans',sans-serif] text-[12px] leading-[15px] text-[#111]">
      <Defs />
      <TitleBar />
      <nav aria-label="Menu" className="flex h-[21px] shrink-0 items-center gap-[15px] bg-white pl-[8px] text-[#8a8a8a]">
        {["File", "Edit", "Form", "View", "Settings", "Window", "Help"].map((m) => <button key={m}>{m}</button>)}
      </nav>
      <Toolbars />
      <div className="flex min-h-0 flex-1">
        <WidgetBox />
        <main className="relative ml-[4px] min-w-0 flex-1 overflow-hidden border border-[#828790] bg-[#a0a0a0]">
          <FormWindow />
        </main>
        <aside className="ml-[4px] flex w-[326px] shrink-0 flex-col pt-[2px]">
          <ObjectInspector />
          <PropertyEditor />
          <ResourceBrowser />
        </aside>
      </div>
      <div role="status" className="h-[20px] shrink-0" />
      <Taskbar />
    </div>
  );
}
